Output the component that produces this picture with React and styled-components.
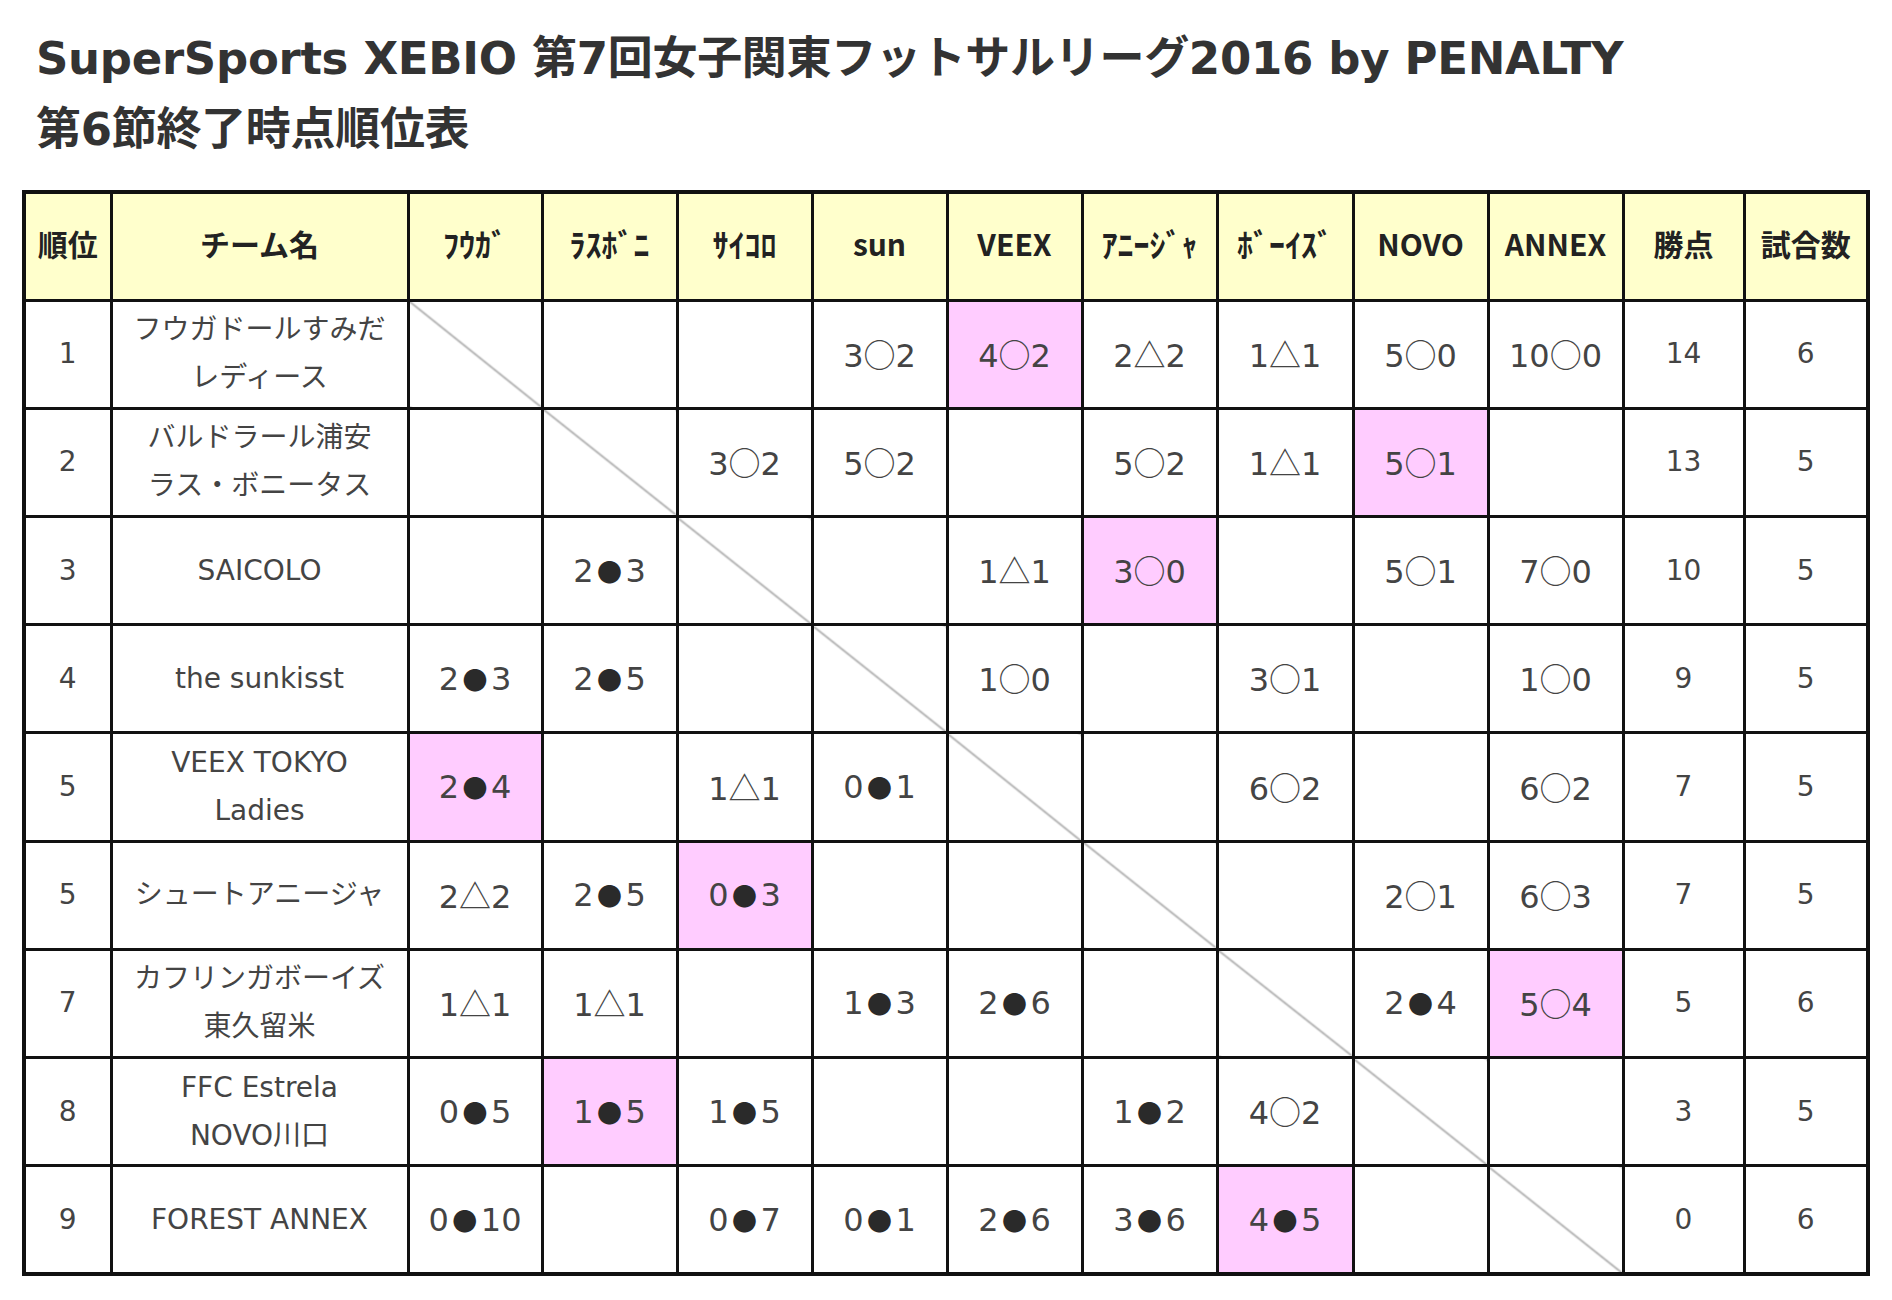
import React from 'react';
import styled, { createGlobalStyle } from 'styled-components';

const Global = createGlobalStyle`
  html, body { margin: 0; padding: 0; background: #fff; }
  body { font-family: "DejaVu Sans", "Noto Sans CJK JP", sans-serif; color: #444; }
`;

const Page = styled.div`
  padding: 23px 0 0 22px;
  width: 1850px;
`;

const Title = styled.h1`
  margin: 0 0 25px 14px;
  font-family: "DejaVu Sans", "Noto Sans CJK JP", sans-serif;
  font-weight: bold;
  font-size: 45px;
  line-height: 71px;
  color: #333;
  letter-spacing: -0.3px;
`;

const Table = styled.table`
  border-collapse: collapse;
  table-layout: fixed;
  width: 1847px;
  border: 4px solid #111;
`;

const Row = styled.tr`
  height: 108.2px;
`;

const Th = styled.th`
  background: #ffffcc;
  border: 3px solid #111;
  padding: 0 0 7px;
  text-align: center;
  vertical-align: middle;
  font-family: "Noto Sans CJK JP", sans-serif;
  font-weight: bold;
  font-size: ${p => (p.$half ? '32px' : '30px')};
  color: #222;
  white-space: nowrap;
`;

const Td = styled.td`
  border: 3px solid #111;
  padding: 0;
  text-align: center;
  vertical-align: middle;
  color: #444;
  font-size: ${p => (p.$score ? '32px' : '28px')};
  line-height: 48px;
  white-space: nowrap;
  background: ${p =>
    p.$pink
      ? '#ffccff'
      : p.$diag
      ? 'linear-gradient(to top right, #fff calc(50% - 1.7px), #a8a8a8 50%, #fff calc(50% + 1.7px))'
      : '#fff'};
`;

const Name = styled.div`
  font-family: "DejaVu Sans", "Noto Sans CJK JP", sans-serif;
  font-size: 28px;
  line-height: 48px;
  color: #444;
`;

const Mark = styled.span`
  font-family: "Noto Sans CJK JP", sans-serif;
  display: inline-block;
  text-align: center;
  color: ${p => (p.$filled ? '#2a2a2a' : '#444')};
  font-size: ${p => (p.$filled ? '0.78em' : '1em')};
  width: ${p => (p.$filled ? '1.28em' : '1em')};
`;

const cols = [
  { label: '順位', w: 87 },
  { label: 'チーム名', w: 297 },
  { label: 'ﾌｳｶﾞ', w: 134, half: true },
  { label: 'ﾗｽﾎﾞﾆ', w: 135, half: true },
  { label: 'ｻｲｺﾛ', w: 135, half: true },
  { label: 'sun', w: 135 },
  { label: 'VEEX', w: 135 },
  { label: 'ｱﾆｰｼﾞｬ', w: 135, half: true },
  { label: 'ﾎﾞｰｲｽﾞ', w: 136, half: true },
  { label: 'NOVO', w: 135 },
  { label: 'ANNEX', w: 135 },
  { label: '勝点', w: 121 },
  { label: '試合数', w: 124 },
];

const rows = [
  { rank: '1', name: ['フウガドールすみだ', 'レディース'], r: ['', '', '', '3○2', '*4○2', '2△2', '1△1', '5○0', '10○0'], pts: '14', games: '6' },
  { rank: '2', name: ['バルドラール浦安', 'ラス・ボニータス'], r: ['', '', '3○2', '5○2', '', '5○2', '1△1', '*5○1', ''], pts: '13', games: '5' },
  { rank: '3', name: ['SAICOLO'], r: ['', '2●3', '', '', '1△1', '*3○0', '', '5○1', '7○0'], pts: '10', games: '5' },
  { rank: '4', name: ['the sunkisst'], r: ['2●3', '2●5', '', '', '1○0', '', '3○1', '', '1○0'], pts: '9', games: '5' },
  { rank: '5', name: ['VEEX TOKYO', 'Ladies'], r: ['*2●4', '', '1△1', '0●1', '', '', '6○2', '', '6○2'], pts: '7', games: '5' },
  { rank: '5', name: ['シュートアニージャ'], r: ['2△2', '2●5', '*0●3', '', '', '', '', '2○1', '6○3'], pts: '7', games: '5' },
  { rank: '7', name: ['カフリンガボーイズ', '東久留米'], r: ['1△1', '1△1', '', '1●3', '2●6', '', '', '2●4', '*5○4'], pts: '5', games: '6' },
  { rank: '8', name: ['FFC Estrela', 'NOVO川口'], r: ['0●5', '*1●5', '1●5', '', '', '1●2', '4○2', '', ''], pts: '3', games: '5' },
  { rank: '9', name: ['FOREST ANNEX'], r: ['0●10', '', '0●7', '0●1', '2●6', '3●6', '*4●5', '', ''], pts: '0', games: '6' },
];

function Score({ text }) {
  const m = text.match(/^(\d+)([○△●])(\d+)$/);
  if (!m) return text;
  return (
    <>
      {m[1]}
      <Mark $filled={m[2] === '●'}>{m[2]}</Mark>
      {m[3]}
    </>
  );
}

export default function App() {
  return (
    <>
      <Global />
      <Page>
        <Title>
          SuperSports XEBIO 第7回女子関東フットサルリーグ2016 by PENALTY
          <br />
          第6節終了時点順位表
        </Title>
        <Table>
          <colgroup>
            {cols.map((c, i) => (
              <col key={i} style={{ width: c.w }} />
            ))}
          </colgroup>
          <thead>
            <Row>
              {cols.map((c, i) => (
                <Th key={i} $half={c.half}>{c.label}</Th>
              ))}
            </Row>
          </thead>
          <tbody>
            {rows.map((row, ri) => (
              <Row key={ri}>
                <Td>{row.rank}</Td>
                <Td>
                  {row.name.map((n, k) => (
                    <Name key={k}>{n}</Name>
                  ))}
                </Td>
                {row.r.map((v, ci) => {
                  const pink = v.startsWith('*');
                  const t = pink ? v.slice(1) : v;
                  return (
                    <Td key={ci} $score $pink={pink} $diag={ci === ri}>
                      <Score text={t} />
                    </Td>
                  );
                })}
                <Td>{row.pts}</Td>
                <Td>{row.games}</Td>
              </Row>
            ))}
          </tbody>
        </Table>
      </Page>
    </>
  );
}
